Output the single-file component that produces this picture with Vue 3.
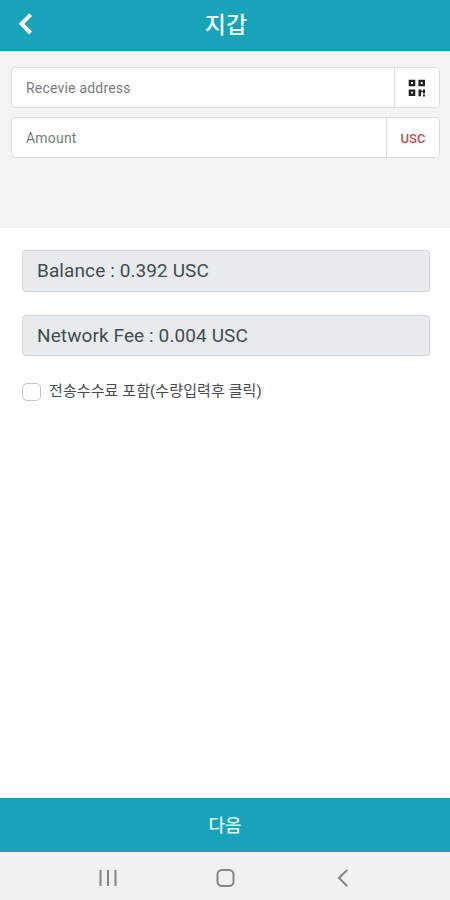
<script setup>
import { ref } from 'vue'

const address = ref('')
const amount = ref('')
const includeFee = ref(false)
</script>

<template>
  <div class="screen">
    <header class="topbar">
      <svg class="back" viewBox="0 0 16 22" width="16" height="22">
        <path d="M12.6 1.6 3.6 10.8l9 9.2" />
      </svg>
      <h1 class="title">지갑</h1>
    </header>

    <section class="form">
      <div class="group">
        <input v-model="address" class="field" placeholder="Recevie address" />
        <button class="addon qr">
          <svg viewBox="0 0 18 18" width="18" height="18">
            <path class="frame" d="M1.9 1.9h4.2v4.2H1.9zM11.6 1.9h4.2v4.2h-4.2zM1.9 11.6h4.2v4.2H1.9z" />
            <path class="bits" d="M10.5 10.5h3v1.5h1.5v-1.500H17v4h-2v-1.5h-2v4.2h-2.5zM15 15.5h2v2h-2z" />
          </svg>
        </button>
      </div>
      <div class="group">
        <input v-model="amount" class="field" placeholder="Amount" />
        <span class="addon unit">USC</span>
      </div>
    </section>

    <main class="details">
      <div class="info">Balance : 0.392 USC</div>
      <div class="info fee">Network Fee : 0.004 USC</div>
      <label class="include">
        <input v-model="includeFee" type="checkbox" class="check" />
        <span class="caption">전송수수료 포함(수량입력후 클릭)</span>
      </label>
    </main>

    <button class="next">다음</button>

    <nav class="system">
      <svg viewBox="0 0 20 20" width="20" height="20"><path d="M2.5 2v16M10 2v16M17.5 2v16" /></svg>
      <svg viewBox="0 0 20 20" width="20" height="20"><rect x="1.5" y="2" width="16" height="16" rx="4.5" /></svg>
      <svg viewBox="0 0 20 20" width="20" height="20"><path d="M14.2 2 6 10l8.2 8" /></svg>
    </nav>
  </div>
</template>

<style>
body {
  margin: 0;
}
</style>

<style scoped>
.screen {
  display: flex;
  flex-direction: column;
  width: 450px;
  height: 900px;
  background: #fff;
  font-family: Roboto, "Noto Sans CJK KR", sans-serif;
  color: #444c52;
}
.screen * {
  box-sizing: border-box;
}
button,
input {
  margin: 0;
  font-family: inherit;
}
.topbar {
  display: grid;
  grid-template-columns: 50px 1fr 48px;
  align-items: center;
  height: 51px;
  flex: none;
  background: #18a3b8;
  border-bottom: 1px solid #1599ad;
}
.back {
  margin: -3px 0 0 18px;
  fill: none;
  stroke: #fff;
  stroke-width: 4;
}
.title {
  margin: 0;
  padding-top: 1px;
  text-align: center;
  color: #e9ffff;
  font-size: 23px;
  line-height: 30px;
  font-weight: 500;
}
.form {
  display: flex;
  flex-direction: column;
  gap: 9px;
  height: 177px;
  flex: none;
  padding: 16px 10px 0 11px;
  background: #f3f3f3;
}
.group {
  display: flex;
  height: 41px;
  border: 1px solid #dcdede;
  border-radius: 4px;
  background: #fff;
  overflow: hidden;
}
.field {
  flex: 1;
  min-width: 0;
  padding: 0 14px;
  border: 0;
  outline: 0;
  background: transparent;
  font-size: 14px;
  letter-spacing: 0.2px;
}
.field::placeholder {
  color: #777c7d;
  opacity: 1;
}
.addon {
  display: flex;
  align-items: center;
  justify-content: center;
  flex: none;
  padding: 0;
  border: 0;
  border-left: 1px solid #dcdede;
  background: #fff;
}
.qr {
  width: 45px;
}
.frame {
  fill: none;
  stroke: #222;
  stroke-width: 2.4;
}
.bits {
  fill: #222;
}
.unit {
  width: 53px;
  padding-top: 1px;
  color: #b84c56;
  font-size: 13px;
  font-weight: 500;
}
.details {
  flex: 1;
  padding: 22px 20px 0 22px;
}
.info {
  height: 42px;
  padding-left: 14px;
  border: 1px solid #d2d7d9;
  border-radius: 3px;
  background: #e7ebed;
  font-size: 19px;
  line-height: 39px;
  letter-spacing: 0.1px;
}
.fee {
  height: 41px;
  margin-top: 23px;
}
.include {
  display: flex;
  align-items: flex-start;
  margin-top: 25px;
}
.check {
  appearance: none;
  width: 19px;
  height: 18px;
  margin-top: 2px;
  border: 1.5px solid #c2c4c5;
  border-radius: 5px;
  background: #fff;
}
.check:checked {
  background: #18a3b8;
}
.caption {
  margin-left: 8px;
  font-size: 15px;
  line-height: 21px;
  letter-spacing: 0.1px;
}
.next {
  height: 54px;
  flex: none;
  padding: 0 0 3px;
  border: 0;
  border-top: 1px solid #2395a5;
  background: #18a3b8;
  color: #dcf7fa;
  font-size: 18px;
  font-weight: 500;
}
.system {
  display: flex;
  justify-content: space-between;
  height: 48px;
  flex: none;
  padding: 16px 97px 0 98px;
  background: #f1f1f1;
}
.system svg {
  fill: none;
  stroke: #858585;
  stroke-width: 2;
}
</style>
